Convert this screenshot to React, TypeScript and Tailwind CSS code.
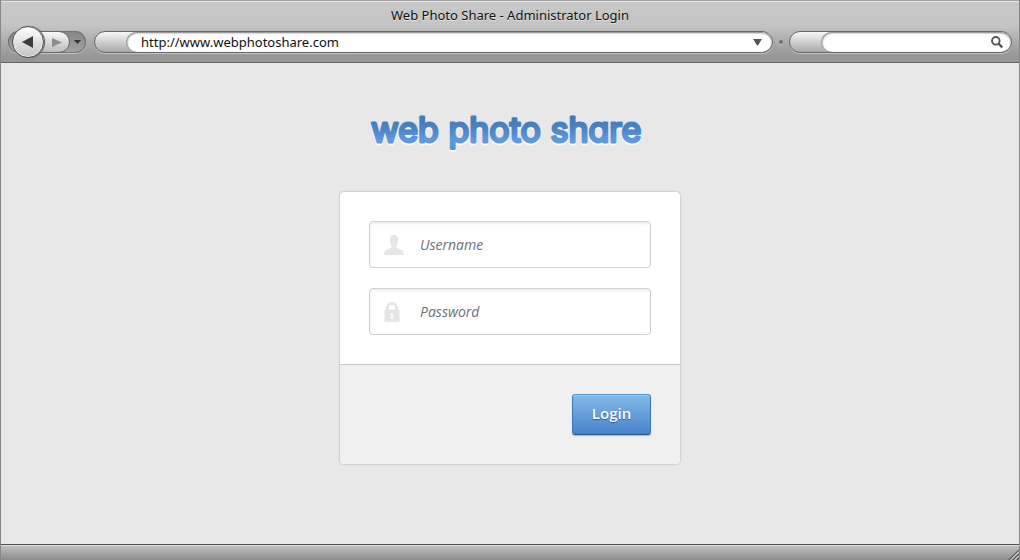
import React from "react";

function BrowserHeader() {
  return (
    <header className="border-t border-b border-t-[#a2a2a2] border-b-[#646464] bg-linear-to-b from-[#c9c9c9] from-0% via-[#c4c4c4] via-40% to-[#979797] to-90% font-['Noto_Sans',sans-serif] shadow-[inset_0_1px_0_#e6e6e6]">
      <p className="h-[25px] pt-1 text-center text-[13px] leading-5 text-[#111] [text-shadow:0_1px_0_#e4e4e4]">
        Web Photo Share - Administrator Login
      </p>
      <div className="flex h-9 items-center gap-2 pr-[7px] pb-1 pl-[7px]">
        <nav
          aria-label="History"
          className="flex h-[22px] w-[78px] shrink-0 items-center rounded-full bg-linear-to-b from-[#858585] to-[#a4a4a4] shadow-[inset_0_0_0_1px_#737373,0_1px_0_#c6c6c6]"
        >
          <button
            type="button"
            aria-label="Back"
            className="z-10 ml-1 flex size-8 shrink-0 items-center justify-center rounded-full border border-[#555] bg-linear-to-b from-white to-[#c4c4c4] shadow-[inset_0_0_0_1px_#ededed,1px_0_1px_#555]"
          >
            <svg width="12" height="12" viewBox="0 0 12 12" aria-hidden="true">
              <path d="M0 6 11 0v12z" fill="#3d3d3d" />
            </svg>
          </button>
          <button
            type="button"
            aria-label="Forward"
            className="-ml-2 flex h-[22px] w-[34px] shrink-0 items-center justify-end rounded-r-full border border-[#666] bg-linear-to-b from-[#f8f8f8] to-[#bcbcbc] pr-[7px]"
          >
            <svg width="10" height="9" viewBox="0 0 10 9" aria-hidden="true">
              <path d="M0 0 10 4.500 0 9z" fill="#8e8e8e" />
            </svg>
          </button>
          <button type="button" aria-label="Recent pages" className="flex h-full flex-1 items-center pl-1">
            <svg width="7" height="4" viewBox="0 0 7 4" aria-hidden="true">
              <path d="M0 0h7L3.500 4z" fill="#333" />
            </svg>
          </button>
        </nav>

        <div className="flex h-[22px] min-w-0 flex-1 overflow-hidden rounded-full border border-[#666] bg-linear-to-b from-[#f8f8f8] to-[#a9a9a9] pl-8 shadow-[0_1px_0_#c6c6c6]">
          <div className="flex min-w-0 flex-1 items-center rounded-full bg-white pr-[10px] pl-[14px] shadow-[inset_0_1px_2px_#777,-1px_0_0_#999]">
            <input
              type="text"
              aria-label="Address"
              defaultValue="http://www.webphotoshare.com"
              className="min-w-0 flex-1 bg-transparent text-[13px] leading-5 text-[#111] outline-none"
            />
            <button type="button" aria-label="Show addresses">
              <svg width="9" height="7" viewBox="0 0 9 7" aria-hidden="true">
                <path d="M0 0h9L4.500 7z" fill="#555" />
              </svg>
            </button>
          </div>
        </div>

        <span className="-mx-0.5 size-1 shrink-0 rounded-full bg-[#707070] shadow-[0_1px_0_#c6c6c6]" />

        <div className="flex h-[22px] w-[223px] shrink-0 overflow-hidden rounded-full border border-[#666] bg-linear-to-b from-[#f8f8f8] to-[#a9a9a9] pl-8 shadow-[0_1px_0_#c6c6c6]">
          <div className="flex min-w-0 flex-1 items-center rounded-full bg-white pr-2 pl-3 shadow-[inset_0_1px_2px_#777,-1px_0_0_#999]">
            <input
              type="text"
              aria-label="Search"
              className="min-w-0 flex-1 bg-transparent text-[13px] leading-5 text-[#111] outline-none"
            />
            <button type="button" aria-label="Run search">
              <svg width="12" height="12" viewBox="0 0 12 12" fill="none" stroke="#555" aria-hidden="true">
                <circle cx="4.800" cy="4.800" r="3.800" strokeWidth="1.900" />
                <path d="M7.600 7.600 11.300 11.500" strokeWidth="2.300" />
              </svg>
            </button>
          </div>
        </div>
      </div>
    </header>
  );
}

function Logo() {
  return (
    <h1>
      <svg width="282" height="50" viewBox="0 0 282 50" role="img" aria-label="web photo share">
        <defs>
          <linearGradient id="logo-fill" gradientUnits="userSpaceOnUse" x1="0" y1="5" x2="0" y2="41">
            <stop offset="0" stopColor="#4377b4" />
            <stop offset="0.400" stopColor="#4e84c4" />
            <stop offset="0.700" stopColor="#5f9add" />
            <stop offset="1" stopColor="#568dcc" />
          </linearGradient>
        </defs>
        <g
          className="font-['Inter',sans-serif] text-[34px] font-normal [font-feature-settings:'cv11']"
          strokeWidth="2.800"
          strokeLinejoin="round"
        >
          <text x="2" y="34" fill="#fafafa" stroke="#fafafa">
            web photo share
          </text>
          <text x="2" y="32" fill="url(#logo-fill)" stroke="url(#logo-fill)">
            web photo share
          </text>
        </g>
      </svg>
    </h1>
  );
}

function UserIcon() {
  return (
    <svg width="20" height="20" viewBox="0 0 20 20" fill="#e6e6e6" aria-hidden="true">
      <path d="M10 0C7.200 0 5.900 1.700 6 4.200c-.5.300-.4 1.800.2 2.600.2 1.700.6 2.700 1.200 3.600v2.200c-.6.900-2 1.300-3.500 1.900C1.600 15.300.4 16.100.4 17.800V20h19.200v-2.200c0-1.700-1.200-2.500-3.500-3.300-1.500-.6-2.900-1-3.500-1.900v-2.200c.6-.9 1-1.900 1.200-3.600.6-.8.700-2.300.2-2.600C14.100 1.700 12.800 0 10 0Z" />
    </svg>
  );
}

function LockIcon() {
  return (
    <svg width="16" height="20" viewBox="0 0 16 20" aria-hidden="true">
      <path d="M3.300 9V6a4.700 4.700 0 0 1 9.400 0v3" fill="none" stroke="#e6e6e6" strokeWidth="2.800" />
      <rect x="0.500" y="7.800" width="15" height="12.200" rx="0.500" fill="#e6e6e6" />
      <path d="M6.500 11.500h2.300v4.500h.7v1h-3v-1h.7v-3.500h-.7z" fill="#fff" />
    </svg>
  );
}

type FieldProps = { label: string; type: string; icon: React.ReactNode };

function Field({ label, type, icon }: FieldProps) {
  return (
    <label className="flex h-[47px] items-center rounded border border-[#cfcfcf] bg-white pl-[14px] shadow-[inset_0_2px_2px_#f0f0f0]">
      <span className="w-9 shrink-0">{icon}</span>
      <input
        type={type}
        aria-label={label}
        placeholder={label}
        className="min-w-0 flex-1 bg-transparent text-sm leading-5 text-[#555] italic outline-none placeholder:text-[#6f7275]"
      />
    </label>
  );
}

export default function App() {
  return (
    <div className="flex min-h-screen flex-col border-x border-[#868686] bg-[#e8e8e8] font-['Open_Sans','Noto_Sans',sans-serif]">
      <BrowserHeader />
      <main className="flex flex-1 flex-col items-center px-4 pt-[47px] pb-10">
        <Logo />
        <form
          onSubmit={(event) => event.preventDefault()}
          className="mt-[31px] w-full max-w-[342px] overflow-hidden rounded-[5px] border border-[#d3d3d3] bg-white shadow-[0_0_2px_#d8d8d8]"
        >
          <div className="flex flex-col gap-5 p-[29px]">
            <Field label="Username" type="text" icon={<UserIcon />} />
            <Field label="Password" type="password" icon={<LockIcon />} />
          </div>
          <div className="flex justify-end border-t border-[#c9c9c9] bg-[#f0f0f0] p-[29px]">
            <button
              type="submit"
              className="h-[41px] w-[79px] rounded-[3px] border border-t-[#4c9ad3] border-r-[#3d78bb] border-b-[#2c5596] border-l-[#3d78bb] bg-linear-to-b from-[#82bbe8] to-[#4a82cb] pb-0.5 text-[15px] font-semibold text-white shadow-[inset_0_1px_0_#9dcdf0,0_1px_1px_#bbb] [text-shadow:0_1px_1px_#2f5f9c]"
            >
              Login
            </button>
          </div>
        </form>
      </main>
      <footer className="flex h-4 items-end justify-end border-t border-[#535053] bg-linear-to-b from-[#c4c4c4] to-[#8d8d8d] shadow-[inset_0_1px_0_#dcdcdc]">
        <svg width="11" height="11" viewBox="0 0 11 11" fill="none" aria-hidden="true">
          <path d="M1 11 11 1M5 11l6-6M9 11l2-2" stroke="#555" strokeWidth="1.200" />
          <path d="M2.500 11 11 2.500M6.500 11 11 6.500" stroke="#e2e2e2" strokeWidth="1" />
        </svg>
      </footer>
    </div>
  );
}
